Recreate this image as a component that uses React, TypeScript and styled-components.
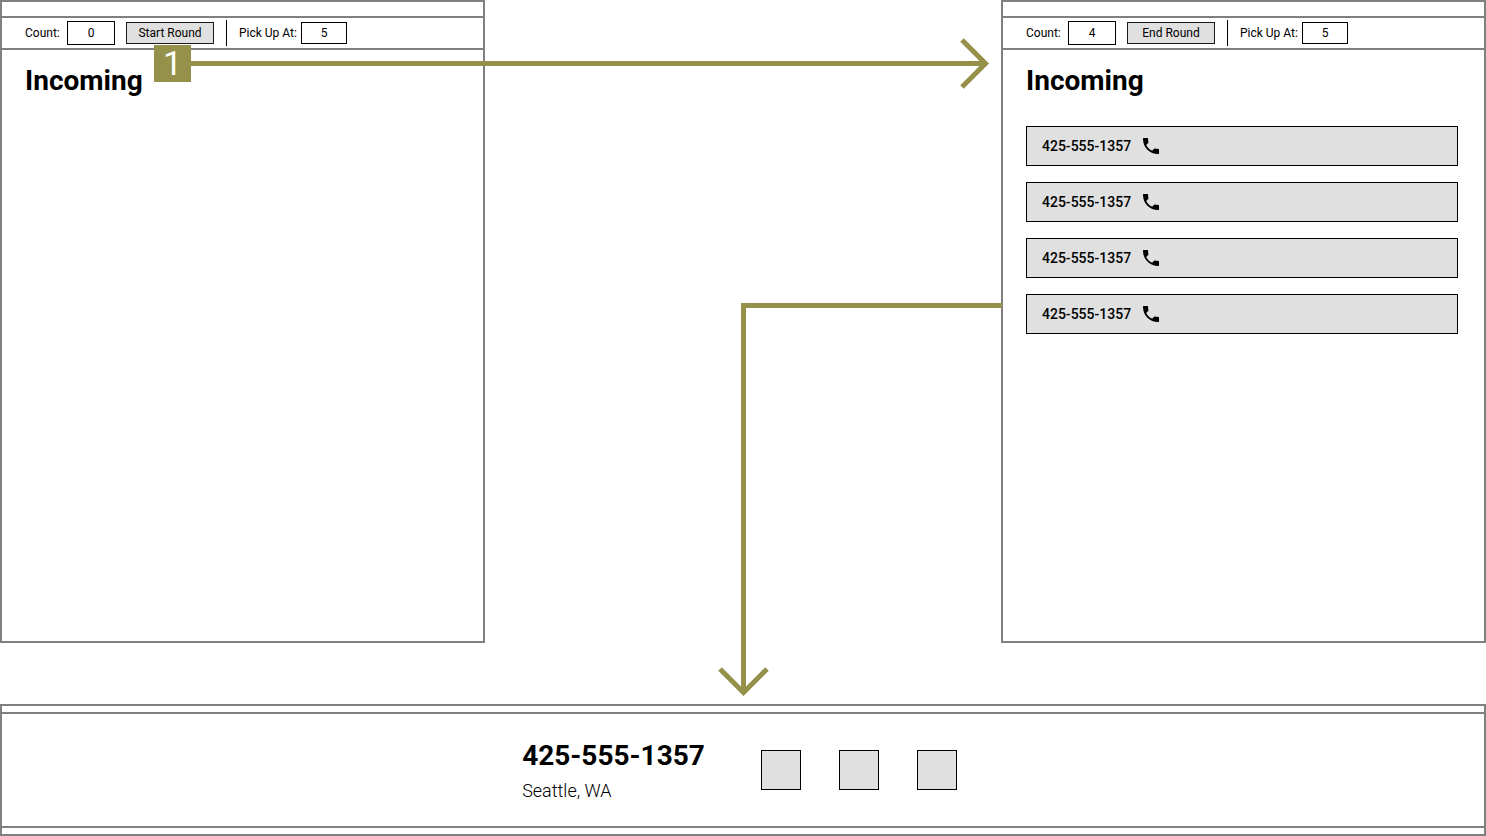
import React from "react";
import styled, { createGlobalStyle } from "styled-components";

const olive = "#95914a";
const frame = "#808080";
const fill = "#e0e0e0";

const GlobalStyle = createGlobalStyle`
  *, *::before, *::after { box-sizing: border-box; }
  body {
    margin: 0;
    background: #fff;
    color: #000;
    font-family: Roboto, "Liberation Sans", sans-serif;
  }
  button, input { font: inherit; color: inherit; }
`;

const Page = styled.main`
  display: flex;
  flex-direction: column;
  gap: 61px;
  min-height: 100vh;
`;

const Flow = styled.div`
  position: relative;
  flex: 1;
  display: grid;
  grid-template-columns: 485fr 516fr 485fr;
`;

const Panel = styled.section`
  display: flex;
  flex-direction: column;
  border: 2px solid ${frame};
`;

const TitleBar = styled.div`
  height: 16px;
  border-bottom: 2px solid ${frame};
`;

const Toolbar = styled.form`
  display: flex;
  align-items: center;
  height: 32px;
  padding-left: 23px;
  border-bottom: 2px solid ${frame};
  font-size: 12px;
  line-height: 16px;
`;

const Field = styled.label<{ $width: number }>`
  display: flex;
  align-items: center;
  justify-content: space-between;
  width: ${(p) => p.$width}px;
  white-space: nowrap;
`;

const NumberBox = styled.input<{ $large?: boolean }>`
  width: ${(p) => (p.$large ? 48 : 46)}px;
  height: ${(p) => (p.$large ? 24 : 22)}px;
  padding: 0;
  border: 1px solid #000;
  border-radius: 0;
  background: #fff;
  text-align: center;
`;

const ButtonSpot = styled.div`
  position: relative;
  display: flex;
  margin: 0 12px 0 11px;
`;

const RoundButton = styled.button`
  width: 88px;
  height: 22px;
  padding: 0;
  border: 1px solid #1a1a1a;
  background: ${fill};
`;

const Divider = styled.span`
  width: 1px;
  height: 26px;
  margin-right: 12px;
  background: #000;
`;

const StepBadge = styled.span`
  position: absolute;
  z-index: 1;
  top: 23px;
  left: 28px;
  display: flex;
  align-items: center;
  justify-content: center;
  width: 37px;
  height: 37px;
  background: ${olive};
  color: #fff;
  font-size: 34px;
  line-height: 37px;
`;

const Content = styled.div`
  padding: 15px 26px 24px 23px;
`;

const Heading = styled.h2`
  margin: 0;
  font-size: 28px;
  line-height: 32px;
  font-weight: 700;
`;

const CallList = styled.ul`
  display: flex;
  flex-direction: column;
  gap: 16px;
  margin: 29px 0 0;
  padding: 0;
  list-style: none;
`;

const CallRow = styled.li`
  display: flex;
  align-items: center;
  gap: 12px;
  height: 40px;
  padding: 0 15px;
  border: 1px solid #000;
  background: ${fill};
  font-size: 14px;
  line-height: 20px;
  font-weight: 500;
`;

const Between = styled.div`
  display: flex;
  justify-content: flex-end;
  margin-bottom: -51px;
  padding-top: 303px;
`;

const Elbow = styled.div`
  position: relative;
  width: calc(50% + 3px);
  margin-right: -1px;
  border: solid ${olive};
  border-width: 5px 0 0 5px;
`;

const DownHead = styled.svg`
  position: absolute;
  left: -29px;
  bottom: -4px;
`;

const StepLine = styled.div`
  position: absolute;
  top: 61px;
  left: 190px;
  right: calc(100% * 485 / 1486 + 14px);
  height: 5px;
  background: ${olive};
`;

const RightHead = styled.svg`
  position: absolute;
  right: -4px;
  top: -23px;
`;

const CallBar = styled.footer`
  border: 2px solid ${frame};
  padding: 6px 0;
`;

const CallBarBody = styled.div`
  display: flex;
  justify-content: center;
  align-items: center;
  gap: 56px;
  height: 116px;
  padding-right: 7px;
  border: solid ${frame};
  border-width: 2px 0;
`;

const Caller = styled.div`
  padding-top: 2px;
`;

const CallerNumber = styled.h1`
  margin: 0 0 7px;
  font-size: 28px;
  line-height: 32px;
  font-weight: 700;
`;

const CallerPlace = styled.p`
  margin: 0;
  font-size: 18px;
  line-height: 24px;
  font-weight: 300;
`;

const Actions = styled.div`
  display: flex;
  gap: 38px;
`;

const ActionButton = styled.button`
  width: 40px;
  height: 40px;
  padding: 0;
  border: 1px solid #000;
  background: ${fill};
`;

const PhoneIcon = () => (
  <svg width="16" height="16" viewBox="3 3 18 18" aria-hidden="true">
    <path d="M21 15.460l-5.270-.610-2.520 2.520c-2.830-1.440-5.150-3.750-6.590-6.590l2.530-2.530L8.540 3H3.030C2.450 13.180 10.820 21.550 21 20.970v-5.510z" />
  </svg>
);

type BoardProps = {
  id: string;
  count: string;
  action: string;
  step?: string;
  calls: string[];
};

const Board = ({ id, count, action, step, calls }: BoardProps) => (
  <Panel>
    <TitleBar />
    <Toolbar onSubmit={(e) => e.preventDefault()}>
      <Field $width={90} htmlFor={`${id}-count`}>
        Count:
        <NumberBox $large id={`${id}-count`} defaultValue={count} />
      </Field>
      <ButtonSpot>
        <RoundButton type="button">{action}</RoundButton>
        {step && <StepBadge>{step}</StepBadge>}
      </ButtonSpot>
      <Divider />
      <Field $width={108} htmlFor={`${id}-pickup`}>
        Pick Up At:
        <NumberBox id={`${id}-pickup`} defaultValue="5" />
      </Field>
    </Toolbar>
    <Content>
      <Heading>Incoming</Heading>
      {calls.length > 0 && (
        <CallList>
          {calls.map((number, i) => (
            <CallRow key={i}>
              {number}
              <PhoneIcon />
            </CallRow>
          ))}
        </CallList>
      )}
    </Content>
  </Panel>
);

const phone = "425-555-1357";

export default function App() {
  return (
    <>
      <GlobalStyle />
      <Page>
        <Flow>
          <Board id="before" count="0" action="Start Round" step="1" calls={[]} />
          <Between>
            <Elbow>
              <DownHead width="52" height="32" viewBox="0 0 52 32" aria-hidden="true">
                <path d="M3 3L26.500 26.500L50 3" fill="none" stroke={olive} strokeWidth="5" />
              </DownHead>
            </Elbow>
          </Between>
          <Board id="after" count="4" action="End Round" calls={[phone, phone, phone, phone]} />
          <StepLine>
            <RightHead width="32" height="52" viewBox="0 0 32 52" aria-hidden="true">
              <path d="M3 2L26.500 25.500L3 49" fill="none" stroke={olive} strokeWidth="5" />
            </RightHead>
          </StepLine>
        </Flow>
        <CallBar>
          <CallBarBody>
            <Caller>
              <CallerNumber>{phone}</CallerNumber>
              <CallerPlace>Seattle, WA</CallerPlace>
            </Caller>
            <Actions>
              <ActionButton type="button" aria-label="Answer" />
              <ActionButton type="button" aria-label="Hold" />
              <ActionButton type="button" aria-label="Hang up" />
            </Actions>
          </CallBarBody>
        </CallBar>
      </Page>
    </>
  );
}
